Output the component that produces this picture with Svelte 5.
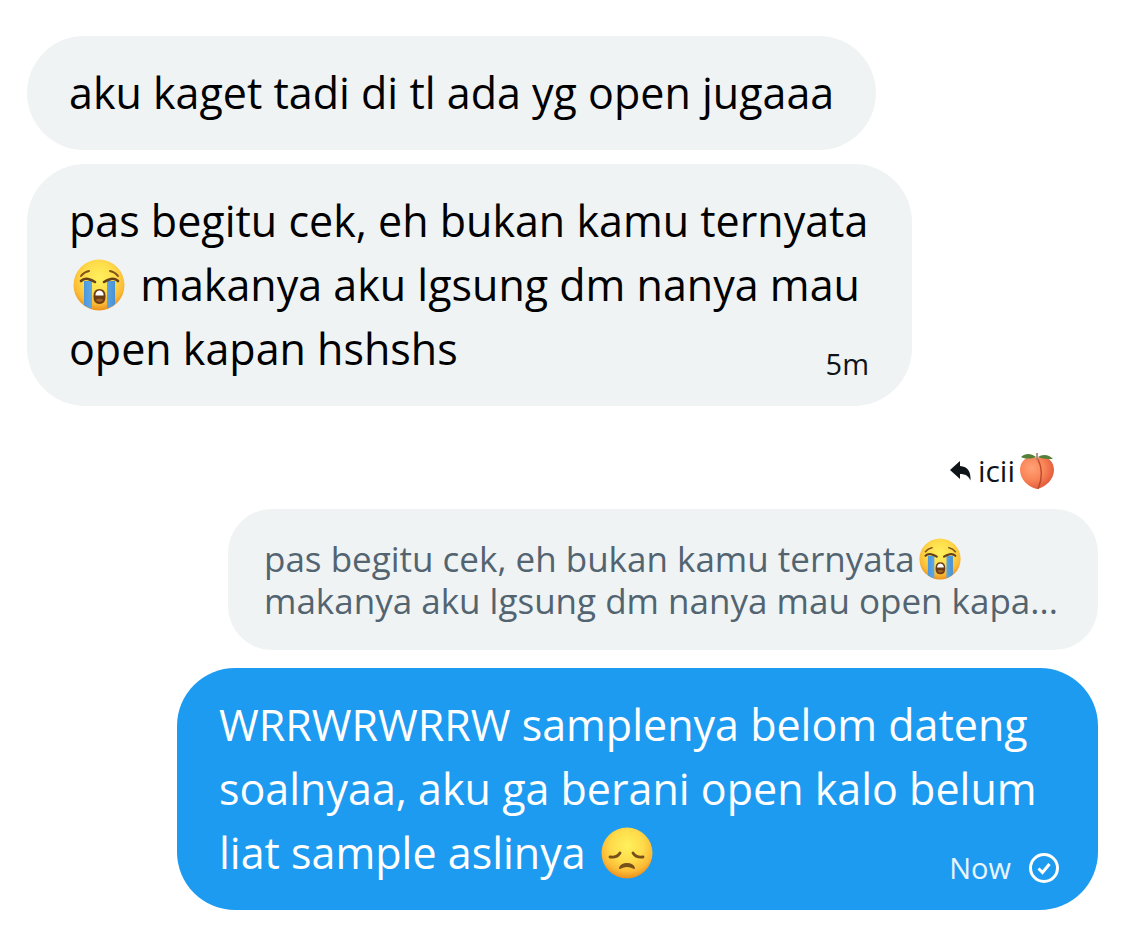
<script>
	const received = [
		{ lines: ['aku kaget tadi di tl ada yg open jugaaa'], width: 849, time: '' },
		{
			lines: ['pas begitu cek, eh bukan kamu ternyata', '😭 makanya aku lgsung dm nanya mau', 'open kapan hshshs'],
			width: 885,
			time: '5m'
		}
	];

	const quote = ['pas begitu cek, eh bukan kamu ternyata😭', 'makanya aku lgsung dm nanya mau open kapa...'];
	const sent = ['WRRWRWRRW samplenya belom dateng', 'soalnyaa, aku ga berani open kalo belum', 'liat sample aslinya 😞'];

	// share of the 1071px wide conversation column
	const share = (width) => `${(width / 1071) * 100}%`;

	const split = (line) => line.split(/(😭|😞)/u).filter((part) => part !== '');
</script>

<svg class="defs" aria-hidden="true">
	<defs>
		<radialGradient id="face" cx="50%" cy="36%" r="64%">
			<stop offset="0" stop-color="#fff05c" />
			<stop offset="0.5" stop-color="#fedb4a" />
			<stop offset="0.8" stop-color="#fbba36" />
			<stop offset="1" stop-color="#ec8f1c" />
		</radialGradient>
		<linearGradient id="tear" x1="0" x2="1" y1="0" y2="0">
			<stop offset="0" stop-color="#4a98dc" />
			<stop offset="0.5" stop-color="#74b8ee" />
			<stop offset="1" stop-color="#4591d6" />
		</linearGradient>
		<radialGradient id="peach" cx="35%" cy="35%" r="70%">
			<stop offset="0" stop-color="#ffa276" />
			<stop offset="0.55" stop-color="#f98356" />
			<stop offset="1" stop-color="#e0573a" />
		</radialGradient>
		<clipPath id="round"><circle cx="26" cy="26" r="25" /></clipPath>
	</defs>
</svg>

{#snippet rich(line)}
	{#each split(line) as part}
		{#if part === '😭'}
			<svg class="emoji" viewBox="0 0 52 52" role="img" aria-label="loudly crying face">
				<circle cx="26" cy="26" r="25.5" fill="url(#face)" />
				<g clip-path="url(#round)">
					<path d="M11 22h8v30h-8zM34 22h8v30h-8z" fill="url(#tear)" />
				</g>
				<path d="M8 22q3-3 7-2t7 3M45 22q-3-3-7-2t-7 3" fill="none" stroke="#654018" stroke-width="2.6" stroke-linecap="round" />
				<path d="M8 17q3-4 8-5M45 17q-3-4-8-5" fill="none" stroke="#80521a" stroke-width="2" stroke-linecap="round" />
				<path d="M20.500 37q0-7 6-7t6 7v1q0 7-6 7t-6-7z" fill="#6b3c13" />
				<path d="M22.500 35q1-3.500 4-3.500t4 3.500v1.500h-8z" fill="#fff" />
				<path d="M22.500 41q4-3 8 0-4 4-8 0z" fill="#a35f28" />
			</svg>
		{:else if part === '😞'}
			<svg class="emoji" viewBox="0 0 52 52" role="img" aria-label="disappointed face">
				<circle cx="26" cy="26" r="25.5" fill="url(#face)" />
				<path d="M9 30q7 1 10-4M42 30q-7 1-10-4" fill="none" stroke="#76501a" stroke-width="2.8" stroke-linecap="round" />
				<path d="M19 41q1.500-4 7-4t7 4q-7-4-14 0z" fill="#76501a" stroke="#76501a" stroke-width="2" stroke-linejoin="round" />
			</svg>
		{:else}{part}{/if}
	{/each}
{/snippet}

<main>
	{#each received as message}
		<article class="bubble" style:width={share(message.width)}>
			<p>
				{#each message.lines as line}
					<span class="line">{@render rich(line)}</span>
				{/each}
			</p>
			{#if message.time}
				<div class="meta"><time>{message.time}</time></div>
			{/if}
		</article>
	{/each}

	<div class="reply-to">
		<svg class="arrow" viewBox="0 0 22 20" aria-hidden="true">
			<path d="M0 9 10 0v5c8 .5 11 6 10.500 14.500-2-4.500-5-6.500-10.500-6.500v5z" fill="#0f1419" />
		</svg>
		<span>icii</span>
		<svg class="peach" viewBox="0 0 36 36" role="img" aria-label="peach">
			<path d="M18 5C10 1 1 7 1 17c0 9 8 17 17 19 9-2 17-10 17-19C35 7 26 1 18 5z" fill="url(#peach)" />
			<path d="M18 5c5 8 6 20 1 31" fill="none" stroke="#b94a2e" stroke-width="1.4" />
			<path d="M17 4C12 0 6 0 2 4c4 2 10 2 15 0zM19 4c4-3 11-3 15 2-5 0-10 0-15-2z" fill="#55803a" />
			<path d="M18 0v7" stroke="#a98972" stroke-width="1.800" />
		</svg>
	</div>

	<blockquote style:width={share(870)}>
		{#each quote as line}
			<span class="line">{@render rich(line)}</span>
		{/each}
	</blockquote>

	<article class="bubble own" style:width={share(921)}>
		<p>
			{#each sent as line}
				<span class="line">{@render rich(line)}</span>
			{/each}
		</p>
		<div class="meta">
			<time>Now</time>
			<svg class="check" viewBox="0 0 30 30" role="img" aria-label="sent">
				<circle cx="15" cy="15" r="13.500" />
				<path d="M9.500 15.500l4 4 7-8.500" />
			</svg>
		</div>
	</article>
</main>

<style>
	:global(body) {
		background: #fff;
	}
	main {
		display: flex;
		flex-direction: column;
		align-items: flex-start;
		box-sizing: border-box;
		padding: 36px 26px 22px 27px;
		color: #000;
		font-family: "Open Sans", "Noto Sans", sans-serif;
	}
	.defs {
		position: absolute;
		width: 0;
		height: 0;
	}
	.bubble {
		display: grid;
		box-sizing: border-box;
		margin-bottom: 14px;
		padding: 25px 43px 25px 42px;
		border-radius: 58px;
		background: #eff3f4;
	}
	p {
		grid-area: 1 / 1;
		margin: 0;
		font-size: 43px;
		line-height: 64px;
	}
	.line {
		display: block;
		height: 1lh;
		white-space: nowrap;
	}
	.emoji {
		width: 52px;
		height: 52px;
		margin: 0 4px;
		vertical-align: -10px;
	}
	.meta {
		grid-area: 1 / 1;
		place-self: end;
		display: flex;
		align-items: center;
		gap: 18px;
		color: #0f1419;
		font-size: 29px;
		line-height: 34px;
	}
	.reply-to {
		display: flex;
		align-items: center;
		align-self: flex-end;
		gap: 4px;
		height: 40px;
		margin: 31px 43px 18px 0;
		color: #0f1419;
		font-size: 30px;
		line-height: 38px;
	}
	.arrow {
		width: 22px;
		height: 20px;
		margin-right: 2px;
	}
	.peach {
		width: 36px;
		height: 36px;
	}
	blockquote {
		align-self: flex-end;
		box-sizing: border-box;
		margin: 0 0 18px;
		padding: 29px 36px 28px;
		border-radius: 44px;
		background: #eff3f4;
		color: #536471;
		font-size: 35px;
		line-height: 42px;
	}
	blockquote .emoji {
		width: 42px;
		height: 42px;
		vertical-align: -8px;
	}
	.own {
		align-self: flex-end;
		margin-bottom: 0;
		background: #1d9bf0;
		color: #fff;
	}
	.own .meta {
		color: #e8f5fd;
	}
	.check {
		width: 30px;
		height: 30px;
		margin-right: -4px;
		fill: none;
		stroke: #fff;
		stroke-width: 3;
	}
</style>
